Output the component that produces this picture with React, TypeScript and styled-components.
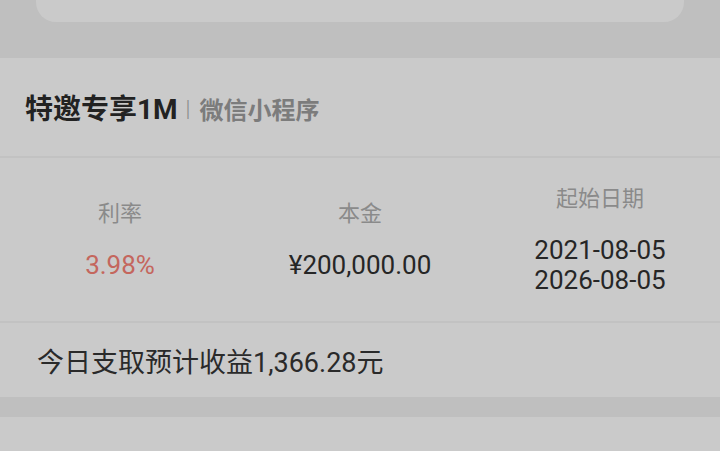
import * as React from 'react';
import styled, { createGlobalStyle } from 'styled-components';

const GlobalStyle = createGlobalStyle`
  html, body {
    margin: 0;
    padding: 0;
    background: #bfbfbf;
    overflow: hidden;
  }
  body {
    font-family: Roboto, 'Noto Sans CJK SC', 'Noto Sans', sans-serif;
  }
`;

const Page = styled.div`
  width: 720px;
  height: 451px;
  overflow: hidden;
  background: #bfbfbf;
  display: flex;
  flex-direction: column;
`;

const TopCard = styled.div`
  height: 22px;
  margin: 0 36px;
  flex-shrink: 0;
  background: #cacaca;
  border-radius: 0 0 20px 20px;
`;

const Section = styled.section<{ $gap: number }>`
  margin-top: ${p => p.$gap}px;
  flex-shrink: 0;
  background: #cacaca;
`;

const TitleRow = styled.div`
  height: 98px;
  padding-left: 25px;
  display: flex;
  align-items: center;
  border-bottom: 2px solid #c2c2c2;
`;

const Title = styled.span`
  font-size: 28px;
  font-weight: 700;
  color: #222;
`;

const Sep = styled.span`
  font-size: 22px;
  font-weight: 300;
  color: #8a8a8a;
  margin: 2px 9px 0 8px;
`;

const Channel = styled.span`
  font-size: 24px;
  font-weight: 700;
  color: #7c7c7c;
  margin-top: 2px;
`;

const Stats = styled.div`
  height: 163px;
  display: grid;
  grid-template-columns: repeat(3, 1fr);
  border-bottom: 2px solid #c2c2c2;
`;

const Stat = styled.div`
  display: flex;
  flex-direction: column;
  align-items: center;
  justify-content: center;
  gap: 21px;
`;

const Label = styled.div`
  font-size: 22px;
  line-height: 30px;
  color: #8a8a8a;
`;

const Value = styled.div<{ $red?: boolean }>`
  font-size: 26px;
  line-height: 30px;
  text-align: center;
  color: ${p => (p.$red ? '#c4665d' : '#262626')};
`;

const Footer = styled.div`
  height: 74px;
  padding-left: 37px;
  display: flex;
  align-items: center;
  font-size: 27px;
  color: #2a2a2a;
`;

export default function App() {
  return (
    <>
      <GlobalStyle />
      <Page>
        <TopCard />
        <Section $gap={36}>
          <TitleRow>
            <Title>特邀专享1M</Title>
            <Sep>|</Sep>
            <Channel>微信小程序</Channel>
          </TitleRow>
          <Stats>
            <Stat>
              <Label>利率</Label>
              <Value $red>3.98%</Value>
            </Stat>
            <Stat>
              <Label>本金</Label>
              <Value>¥200,000.00</Value>
            </Stat>
            <Stat>
              <Label>起始日期</Label>
              <Value>
                2021-08-05
                <br />
                2026-08-05
              </Value>
            </Stat>
          </Stats>
          <Footer>今日支取预计收益1,366.28元</Footer>
        </Section>
        <Section $gap={20}>
          <TitleRow>
            <Title>特邀专享3M</Title>
            <Sep>|</Sep>
            <Channel>微信小程序</Channel>
          </TitleRow>
        </Section>
      </Page>
    </>
  );
}
